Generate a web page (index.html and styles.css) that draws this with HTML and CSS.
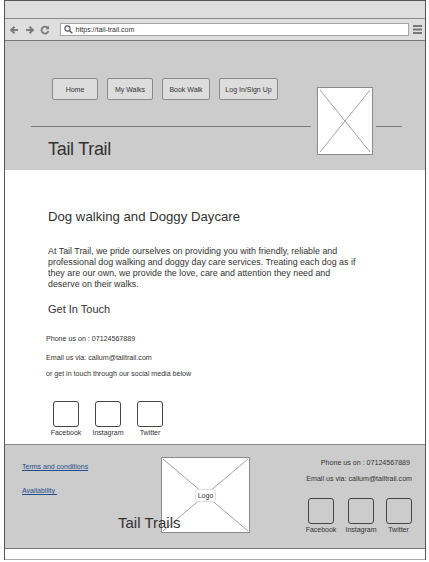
FILE: index.html
```html
<!DOCTYPE html>
<html>
<head>
<meta charset="utf-8">
<link rel="stylesheet" href="styles.css">
</head>
<body>
<div class="window">
  <div class="titlebar"></div>
  <div class="toolbar">
    <svg class="tool-icon" width="10" height="10" viewBox="0 0 10 10"><path d="M9 5H2.5M5.5 1.8L2.2 5L5.5 8.2" fill="none" stroke="#7a7a7a" stroke-width="2"/></svg>
    <svg class="tool-icon" width="10" height="10" viewBox="0 0 10 10"><path d="M1 5H7.5M4.5 1.8L7.8 5L4.5 8.2" fill="none" stroke="#7a7a7a" stroke-width="2"/></svg>
    <svg class="tool-icon" width="10" height="10" viewBox="0 0 10 10"><path d="M8 3.2A3.5 3.5 0 1 0 8.4 6" fill="none" stroke="#7a7a7a" stroke-width="1.8"/><path d="M9 0.8V4.2H5.6Z" fill="#7a7a7a"/></svg>
    <div class="url">
      <svg width="9" height="9" viewBox="0 0 9 9"><circle cx="3.5" cy="3.5" r="2.6" fill="none" stroke="#555" stroke-width="1.1"/><path d="M5.4 5.4L8.3 8.3" stroke="#555" stroke-width="1.4"/></svg>
      <span>https://tail-trail.com</span>
    </div>
    <svg class="menu-icon" width="9" height="9" viewBox="0 0 9 9"><rect y="0" width="9" height="2" fill="#777"/><rect y="3.5" width="9" height="2" fill="#777"/><rect y="7" width="9" height="2" fill="#777"/></svg>
  </div>

  <header class="hero">
    <div class="hero-main">
      <nav class="nav">
        <a class="btn btn-home">Home</a>
        <a class="btn btn-walks">My Walks</a>
        <a class="btn btn-book">Book Walk</a>
        <a class="btn btn-login">Log In/Sign Up</a>
      </nav>
      <div class="rule"></div>
      <div class="brand">Tail Trail</div>
    </div>
    <div class="hero-img placeholder">
      <svg viewBox="0 0 54 66" preserveAspectRatio="none"><path d="M2 2L52 64M52 2L2 64" stroke="#8a8a8a" stroke-width="0.8"/></svg>
    </div>
    <div class="rule rule-short"></div>
  </header>

  <main class="content">
    <h1 class="heading">Dog walking and Doggy Daycare</h1>
    <p class="intro">At Tail Trail, we pride ourselves on providing you with friendly, reliable and<br>professional dog walking and doggy day care services. Treating each dog as if<br>they are our own, we provide the love, care and attention they need and<br>deserve on their walks.</p>
    <h2 class="subheading">Get In Touch</h2>
    <p class="small phone">Phone us on : 07124567889</p>
    <p class="small email">Email us via: callum@tailtrail.com</p>
    <p class="small social-note">or get in touch through our social media below</p>
    <div class="socials">
      <div class="social"><div class="sbox"></div><span>Facebook</span></div>
      <div class="social"><div class="sbox"></div><span>Instagram</span></div>
      <div class="social"><div class="sbox"></div><span>Twitter</span></div>
    </div>
  </main>

  <footer class="footer">
    <div class="links">
      <a class="flink">Terms and conditions</a>
      <a class="flink">Availability&nbsp;</a>
    </div>
    <div class="logo placeholder">
      <svg viewBox="0 0 88 75" preserveAspectRatio="none"><path d="M1 1L87 74M87 1L1 74" stroke="#8a8a8a" stroke-width="0.8"/></svg>
      <span class="logo-label">Logo</span>
    </div>
    <div class="fcontact">
      <p class="small">Phone us on : 07124567889</p>
      <p class="small f-email">Email us via: callum@tailtrail.com</p>
      <div class="fsocials">
        <div class="social fs-fb"><div class="sbox"></div><span>Facebook</span></div>
        <div class="social fs-ig"><div class="sbox"></div><span>Instagram</span></div>
        <div class="social fs-tw"><div class="sbox"></div><span>Twitter</span></div>
      </div>
    </div>
    <div class="ftitle">Tail Trails</div>
  </footer>
  <div class="bottom"></div>
</div>
</body>
</html>
```

FILE: styles.css
```css
* { box-sizing: border-box; }
html, body { margin: 0; padding: 0; background: #fff; }
body { font-family: "Liberation Sans", Arial, sans-serif; color: #333; }
p, h1, h2 { margin: 0; font-weight: normal; }

.window {
  margin-left: 4px;
  width: 422px;
  border-left: 1px solid #555;
  border-right: 1px solid #555;
  border-top: 1px solid #555;
}

.titlebar {
  height: 18px;
  background: #dedede;
  border-bottom: 1px solid #8a8a8a;
}

.toolbar {
  height: 22px;
  background: #dedede;
  border-bottom: 1px solid #777;
  display: flex;
  align-items: center;
  padding-left: 4px;
}
.tool-icon { margin-right: 5.5px; display: block; }
.url {
  margin-left: 4px;
  width: 349px;
  height: 13px;
  background: #fff;
  border: 1px solid #a5a5a5;
  display: flex;
  align-items: center;
  padding-left: 3px;
  gap: 3px;
  font-size: 7px;
  color: #333;
}
.url svg { display: block; }
.menu-icon { margin-left: 4px; display: block; }

.hero {
  height: 129px;
  background: #cccccc;
  display: flex;
  align-items: flex-start;
  padding-left: 26px;
}
.hero-main { width: 280px; }
.nav {
  margin-top: 37px;
  padding-left: 21px;
  display: flex;
  gap: 9px;
}
.btn {
  height: 22px;
  background: #dddddd;
  border: 1px solid #8a8a8a;
  border-radius: 2px;
  font-size: 7px;
  color: #333;
  display: flex;
  align-items: center;
  justify-content: center;
}
.btn-home { width: 46px; }
.btn-walks { width: 46px; }
.btn-book { width: 48px; }
.btn-login { width: 59px; }
.rule { height: 1px; background: #7a7a7a; margin-top: 26px; }
.brand {
  margin-top: 12px;
  padding-left: 17px;
  font-size: 18px;
  line-height: 20px;
  letter-spacing: -0.3px;
  color: #333;
}
.placeholder { background: #fff; border: 1px solid #8a8a8a; position: relative; }
.placeholder svg { display: block; width: 100%; height: 100%; }
.hero-img { width: 56px; height: 68px; margin-left: 6px; margin-top: 46px; }
.rule-short { width: 26px; margin-left: 3px; margin-top: 85px; }

.content {
  height: 274px;
  background: #fff;
  padding: 39px 0 0 43px;
}
.heading { font-size: 13.2px; line-height: 16px; color: #333; }
.intro {
  margin-top: 21px;
  font-size: 8.9px;
  line-height: 11px;
  color: #333;
}
.subheading {
  margin-top: 12px;
  font-size: 11px;
  line-height: 14px;
  color: #333;
}
.small { font-size: 7.1px; line-height: 10px; color: #333; }
.phone { margin-top: 18px; margin-left: -2px; }
.email { margin-top: 8.5px; margin-left: -2px; }
.social-note { margin-top: 6.5px; margin-left: -2px; }

.socials { display: flex; gap: 6px; margin-top: 22px; }
.social {
  width: 36px;
  display: flex;
  flex-direction: column;
  align-items: center;
  font-size: 7px;
  line-height: 9px;
  color: #333;
}
.sbox {
  width: 26px;
  height: 26px;
  border: 1.5px solid #444;
  border-radius: 3px;
  margin-bottom: 1px;
}
.socials .sbox { background: #fff; }

.footer {
  position: relative;
  height: 105px;
  background: #cccccc;
  border-top: 1px solid #8a8a8a;
  border-bottom: 1px solid #777;
  display: grid;
  grid-template-columns: 156px 89px 1fr;
  align-items: start;
}
.links {
  padding: 17px 0 0 17px;
  display: flex;
  flex-direction: column;
  gap: 14px;
}
.flink {
  font-size: 7px;
  line-height: 10px;
  color: #1f4e8c;
  text-decoration: underline;
}
.logo {
  margin-top: 12px;
  height: 76px;
  display: flex;
  align-items: center;
  justify-content: center;
}
.logo svg { position: absolute; inset: 0; }
.logo-label {
  position: relative;
  background: #fff;
  border: 1px solid #ddd;
  border-radius: 3px;
  padding: 1px 2px;
  font-size: 7px;
  line-height: 9px;
  color: #333;
}
.fcontact {
  padding: 13px 13px 0 0;
  display: flex;
  flex-direction: column;
  align-items: flex-end;
}
.fcontact .small:first-child { margin-right: 2px; }
.f-email { margin-top: 6px; }
.fsocials { display: flex; gap: 8px; margin-top: 14px; }
.fsocials .social { width: auto; }
.fs-fb { width: 32px !important; }
.fs-ig { width: 32px !important; }
.fs-tw { width: 27px !important; }
.ftitle {
  position: absolute;
  left: 113px;
  top: 69px;
  font-size: 15px;
  line-height: 17px;
  color: #333;
}

.bottom {
  height: 11px;
  background: #fff;
  border-bottom: 1px solid #aaa;
}
```
